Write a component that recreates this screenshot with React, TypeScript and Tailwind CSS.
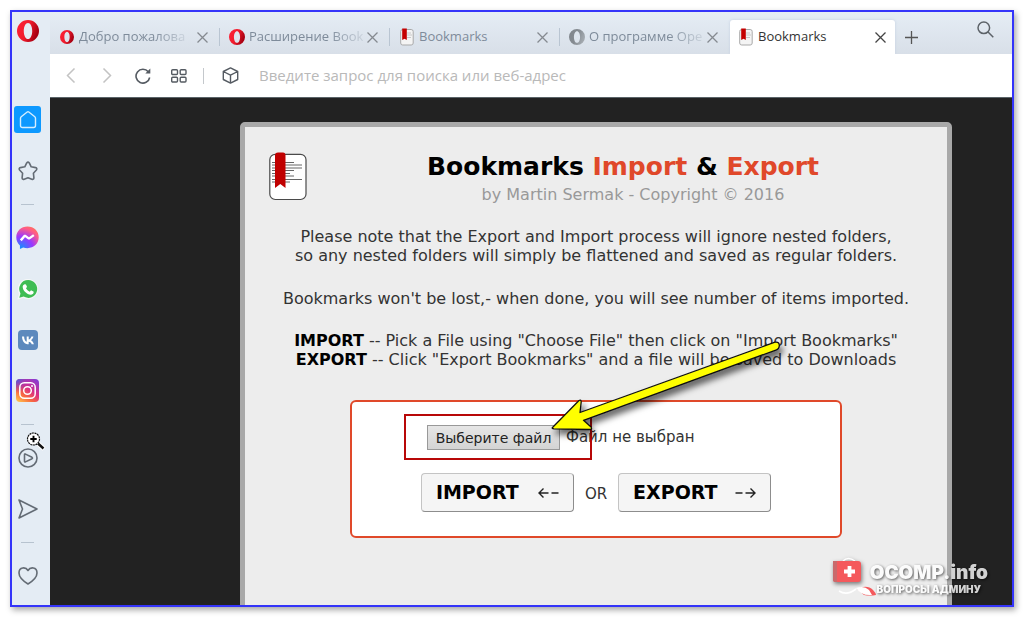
import React, { ReactNode } from "react";

const uiFont = "font-['Open_Sans','Noto_Sans',sans-serif]";
const pageFont = "font-['DejaVu_Sans',sans-serif]";

function OperaRing({ size, gray = false }: { size: number; gray?: boolean }) {
  const id = gray ? "ring-gray" : "ring-red";
  return (
    <svg width={size} height={size} viewBox="0 0 24 24" aria-hidden="true" className="shrink-0">
      <defs>
        <linearGradient id={id} x1="0" y1="0" x2="1" y2="0.4">
          <stop offset="0" stopColor={gray ? "#80868c" : "#ff2138"} />
          <stop offset="0.55" stopColor={gray ? "#858b91" : "#f01c2c"} />
          <stop offset="1" stopColor={gray ? "#a2a8ae" : "#a80012"} />
        </linearGradient>
      </defs>
      <path
        fillRule="evenodd"
        fill={`url(#${id})`}
        d="M12 0a12 12 0 1 1 0 24a12 12 0 0 1 0-24zM12 3.200c-2.600 0-4.600 3.800-4.600 8.800s2 8.800 4.600 8.800s4.600-3.800 4.600-8.800s-2-8.800-4.600-8.800z"
      />
    </svg>
  );
}

function BookFavicon() {
  return (
    <svg width="14" height="18" viewBox="0 0 14 18" aria-hidden="true" className="shrink-0">
      <rect x="0.700" y="1.500" width="12.500" height="15.500" rx="2" fill="#f4f4f4" stroke="#a9a9a9" />
      <path d="M7 5h4M7 7h5M7 9.500h4" stroke="#bdbdbd" strokeWidth="0.800" />
      <path d="M2.200 0.500h4.600v11.500l-2.300-1.200l-2.300 1.200z" fill="#c40000" />
    </svg>
  );
}

function BookIcon() {
  return (
    <svg width="38" height="49" viewBox="0 0 38 49" aria-hidden="true" className="shrink-0">
      <rect x="0.800" y="2.300" width="36.200" height="45.200" rx="5.500" fill="#fff" stroke="#4a4a4a" strokeWidth="1.200" />
      <path
        d="M3 10.500h22M3 13h30M3 16h30M3 18.500h22M3 21.500h18M3 24h22M3 27.500h30M3 30h18"
        stroke="#555"
        strokeWidth="0.900"
      />
      <path d="M6 3.500Q6 0.500 9 0.500h5Q16.500 0.500 16.500 3.500V36l-5.200-4L6 36z" fill="#c00000" />
    </svg>
  );
}

function CloseMark() {
  return (
    <svg width="11" height="11" viewBox="0 0 11 11" fill="none" stroke="currentColor" strokeWidth="1.300">
      <path d="M0.500 0.500l10 10M10.500 0.500l-10 10" />
    </svg>
  );
}

function Tab({
  icon,
  title,
  active = false,
  last = false,
  fade = false,
}: {
  icon: ReactNode;
  title: string;
  active?: boolean;
  last?: boolean;
  fade?: boolean;
}) {
  return (
    <div
      className={
        active
          ? "flex h-[34px] w-[165px] items-center rounded-t-[3px] bg-white pr-[9px] pl-2 text-[#333] shadow-[0_0_3px_#c3cfdf]"
          : "flex h-[34px] w-[170px] items-center pl-[9px] text-[#7e8b9a]"
      }
    >
      <button className="flex min-w-0 flex-1 items-center gap-1 text-left text-[13px] whitespace-nowrap">
        <span className="flex w-4 shrink-0 justify-center">{icon}</span>
        <span className={fade ? "[mask-image:linear-gradient(to_right,#000_70%,#0003)]" : ""}>{title}</span>
      </button>
      <button aria-label="Закрыть вкладку" className={active ? "ml-1 text-[#444]" : "mr-[11px] ml-1 text-[#858a90]"}>
        <CloseMark />
      </button>
      {!active && <span className={last ? "w-px" : "h-[18px] w-px bg-[#b9c5d2]"} />}
    </div>
  );
}

function SideItem({ label, children }: { label: string; children: ReactNode }) {
  return (
    <button aria-label={label} className="flex h-[51px] w-full shrink-0 items-center justify-center">
      {children}
    </button>
  );
}

function SideRule() {
  return (
    <div className="flex h-4 shrink-0 items-center justify-center">
      <span className="h-px w-[13px] bg-[#b7c3cf]" />
    </div>
  );
}

const line = { fill: "none", stroke: "#646c75", strokeWidth: 1.6, strokeLinejoin: "round" as const, strokeLinecap: "round" as const };

function Sidebar() {
  return (
    <nav className="relative flex w-[38px] shrink-0 flex-col bg-[#e4ecf4] pr-[7px]">
      <div className="flex h-[82px] shrink-0 justify-center pt-2">
        <button aria-label="Меню" className="h-[22px]">
          <OperaRing size={22} />
        </button>
      </div>
      <SideItem label="Экспресс-панель">
        <span className="flex size-[27px] items-center justify-center rounded-[3px] bg-[#0d99ff]">
          <svg width="18" height="18" viewBox="0 0 18 18" fill="none" stroke="#d5eeff" strokeWidth="1.400" strokeLinejoin="round">
            <path d="M1.500 7.200Q1.500 6.300 2.200 5.700L8.200 1Q9 0.500 9.800 1L15.800 5.700Q16.500 6.300 16.500 7.200V14.500Q16.500 16.500 14.500 16.500H3.500Q1.500 16.500 1.500 14.500z" />
          </svg>
        </span>
      </SideItem>
      <SideItem label="Закладки">
        <svg width="20" height="20" viewBox="0 0 20 20" {...line}>
          <path d="M8.700 1.900Q10 0.300 11.300 1.900L13.200 5.800L17.500 6.600Q19.600 7.300 18.400 9L15.400 12.200L15.900 16.800Q15.700 18.900 13.800 18.200L10 16.700L6.200 18.200Q4.300 18.900 4.100 16.800L4.600 12.200L1.600 9Q0.400 7.300 2.500 6.600L6.800 5.800z" />
        </svg>
      </SideItem>
      <SideRule />
      <SideItem label="Messenger">
        <svg width="23" height="23" viewBox="0 0 24 24">
          <defs>
            <radialGradient id="msgr" cx="0.200" cy="1" r="1.100">
              <stop offset="0" stopColor="#0a95ff" />
              <stop offset="0.500" stopColor="#9a38ff" />
              <stop offset="0.850" stopColor="#ff5c87" />
              <stop offset="1" stopColor="#ff7061" />
            </radialGradient>
          </defs>
          <path fill="url(#msgr)" d="M12 0.500C5.300 0.500 0.300 5.300 0.300 11.800c0 3.500 1.400 6.500 3.800 8.500v3.600l3.400-1.500c1.400.5 2.900.7 4.500.7c6.700 0 11.700-4.800 11.700-11.300S18.700.5 12 .5z" />
          <path d="M5 15l4.300-5l4.200 3.200L18.600 9.500" fill="none" stroke="#fff" strokeWidth="2.500" strokeLinejoin="bevel" />
        </svg>
      </SideItem>
      <SideItem label="WhatsApp">
        <svg width="22" height="22" viewBox="0 0 24 24">
          <path fill="#f5f8f7" d="M12 1a11 11 0 1 1-5.200 20.700L0.500 23.500l1.800-6.200A11 11 0 0 1 12 1z" />
          <path fill="#3fbd54" d="M12.200 2.300a9.700 9.700 0 1 1-4.900 18L2.500 21.600l1.300-4.700A9.700 9.700 0 0 1 12.200 2.300z" />
          <path
            fill="#fff"
            d="M8.300 6.800h.8c.4 0 .6.200.8.600l.9 2c.1.300.1.500-.1.800l-.9 1.100c.9 1.800 2.200 2.900 4.100 3.700l1-1.200c.2-.3.500-.4.800-.2l2.100 1c.3.100.5.300.4.700c0 1.900-1.600 2.900-3.100 2.900c-4.600-.5-8.700-4.500-8.900-8.500c0-1.200.8-2.500 2.100-2.900z"
          />
        </svg>
      </SideItem>
      <SideItem label="ВКонтакте">
        <svg width="20" height="20" viewBox="0 0 20 20">
          <rect width="20" height="20" rx="4" fill="#5d89bd" />
          <path
            fill="#fff"
            d="M10.700 14.300C6.600 14.300 4.200 11.500 4 6.500h2.100c.1 3.400 1.400 5 2.600 5.300V6.500h2v3c1.200-.1 2.300-1.500 2.700-3h2c-.3 1.800-1.500 3.100-2.400 3.700c.9.500 2.300 1.600 2.900 4.100h-2.200c-.4-1.500-1.600-2.500-3-2.600z"
          />
        </svg>
      </SideItem>
      <SideItem label="Instagram">
        <svg width="23" height="23" viewBox="0 0 23 23">
          <defs>
            <linearGradient id="insta" x1="0.100" y1="1" x2="0.800" y2="0">
              <stop offset="0" stopColor="#ffc24d" />
              <stop offset="0.300" stopColor="#f8693f" />
              <stop offset="0.600" stopColor="#d92e85" />
              <stop offset="1" stopColor="#8a3bd0" />
            </linearGradient>
            <radialGradient id="instaBlue" cx="0" cy="0" r="0.600">
              <stop offset="0" stopColor="#3d62e0" />
              <stop offset="1" stopColor="#8a3bd0" stopOpacity="0" />
            </radialGradient>
          </defs>
          <rect width="23" height="23" rx="4" fill="url(#insta)" />
          <rect width="23" height="23" rx="4" fill="url(#instaBlue)" />
          <g fill="none" stroke="#fff" strokeWidth="1.500">
            <rect x="3.800" y="3.800" width="15.400" height="15.400" rx="4.500" />
            <circle cx="11.500" cy="11.500" r="3.800" />
          </g>
          <circle cx="16" cy="7" r="1" fill="#fff" />
        </svg>
      </SideItem>
      <SideRule />
      <SideItem label="Плеер">
        <svg width="20" height="20" viewBox="0 0 20 20" {...line}>
          <circle cx="10" cy="10" r="9" />
          <path d="M6.500 6.700Q6.500 5.700 7.500 6.100L14 9.300Q15 10 14 10.700L7.500 13.900Q6.500 14.300 6.500 13.300z" />
        </svg>
      </SideItem>
      <SideItem label="Мой поток">
        <svg width="20" height="20" viewBox="0 0 20 20" {...line}>
          <path d="M1 1L19 10L1 19L4.500 10z" />
        </svg>
      </SideItem>
      <SideRule />
      <SideItem label="Избранное">
        <svg width="20" height="18" viewBox="0 0 20 18" {...line}>
          <path d="M10 3.500C7.800-0.200 1-0.300 1 6C1 10.500 5.500 14.200 10 17C14.500 14.200 19 10.500 19 6C19-0.300 12.200-0.200 10 3.500z" />
        </svg>
      </SideItem>
      <svg className="absolute top-[419px] left-[14px]" width="20" height="20" viewBox="0 0 20 20" aria-hidden="true">
        <path d="M12 12.500l6 5.500" stroke="#fff" strokeWidth="4.500" />
        <path d="M12 12.500l5.500 5" stroke="#111" strokeWidth="2.400" />
        <circle cx="7.500" cy="8" r="6" fill="#fff" stroke="#111" strokeWidth="1.200" strokeDasharray="2 0.600" />
        <path d="M7.500 4.800v6.400M4.300 8h6.400" stroke="#000" strokeWidth="1.900" />
      </svg>
    </nav>
  );
}

function TabStrip() {
  return (
    <header className="flex h-[42px] items-end bg-linear-to-b from-[#e5edf5] to-[#d8dfe8]">
      <Tab icon={<OperaRing size={14} />} title="Добро пожалова" fade />
      <Tab icon={<OperaRing size={16} />} title="Расширение Book" fade />
      <Tab icon={<BookFavicon />} title="Bookmarks" />
      <Tab icon={<OperaRing size={16} gray />} title="О программе Оре" fade last />
      <Tab icon={<BookFavicon />} title="Bookmarks" active />
      <button aria-label="Новая вкладка" className="ml-2.5 flex h-[34px] items-center text-[#555]">
        <svg width="13" height="13" viewBox="0 0 13 13" stroke="currentColor" strokeWidth="1.300">
          <path d="M6.500 0v13M0 6.500h13" />
        </svg>
      </button>
      <button aria-label="Поиск по вкладкам" className="mr-[18px] mb-4 ml-auto text-[#5c6268]">
        <svg width="17" height="17" viewBox="0 0 17 17" fill="none" stroke="currentColor" strokeWidth="1.500">
          <circle cx="6.800" cy="6.800" r="5.800" />
          <path d="M11 11l5.300 5.300" />
        </svg>
      </button>
    </header>
  );
}

function AddressBar() {
  return (
    <div className="flex h-11 items-center border-b border-[#5a6468] bg-white pl-4 text-[#555b62]">
      <div className="flex items-center gap-[26px] text-[#c3c3c3]">
        <button aria-label="Назад">
          <svg width="10" height="15" viewBox="0 0 10 15" fill="none" stroke="currentColor" strokeWidth="1.500"><path d="M8.500 0.500l-7 7l7 7" /></svg>
        </button>
        <button aria-label="Вперёд">
          <svg width="10" height="15" viewBox="0 0 10 15" fill="none" stroke="currentColor" strokeWidth="1.500"><path d="M1.500 0.500l7 7l-7 7" /></svg>
        </button>
      </div>
      <button aria-label="Обновить" className="ml-[23px]">
        <svg width="16" height="16" viewBox="0 0 16 16" fill="none" stroke="currentColor" strokeWidth="1.600">
          <path d="M13.300 3.800A6.900 6.900 0 1 0 14.700 9.500" />
          <path d="M15.300 0.600v5h-5z" fill="currentColor" stroke="none" />
        </svg>
      </button>
      <button aria-label="Экспресс-панель" className="ml-5">
        <svg width="16" height="14" viewBox="0 0 16 14" fill="none" stroke="currentColor" strokeWidth="1.400">
          <rect x="0.700" y="0.700" width="5.800" height="4.800" rx="1" />
          <rect x="9.200" y="0.700" width="5.800" height="4.800" rx="1" />
          <rect x="0.700" y="8.200" width="5.800" height="4.800" rx="1" />
          <rect x="9.200" y="8.200" width="5.800" height="4.800" rx="1" />
        </svg>
      </button>
      <span className="ml-4 h-4 w-px bg-[#c4c8cc]" />
      <button aria-label="Криптокошелёк" className="ml-[18px]">
        <svg width="17" height="17" viewBox="0 0 17 17" fill="none" stroke="currentColor" strokeWidth="1.400" strokeLinejoin="round">
          <path d="M8.500 0.900L15.700 4.500V12.500L8.500 16.100L1.300 12.500V4.500zM1.300 4.500L8.500 8.200L15.700 4.500M8.500 8.200V16.100" />
        </svg>
      </button>
      <input
        aria-label="Адресная строка"
        placeholder="Введите запрос для поиска или веб-адрес"
        className="ml-5 min-w-0 flex-1 bg-transparent text-[15px] text-[#333] outline-none placeholder:text-[#b9b9b9]"
      />
    </div>
  );
}

const actionButton =
  "flex h-[39px] w-[153px] items-center justify-between rounded-[4px] border border-[#c4c4c4] border-r-[#8d8d8d] border-b-[#8d8d8d] bg-[#f5f5f5] px-3.5 text-[19px] font-bold text-black";

function DashArrow({ right = false }: { right?: boolean }) {
  return (
    <svg width="21" height="12" viewBox="0 0 21 12" fill="none" stroke="#222" strokeWidth="1.400" aria-hidden="true">
      {right ? <path d="M0.500 6h7M10.500 6h9M15.500 1.500l4.500 4.500l-4.500 4.500" /> : <path d="M20.500 6h-7M10.500 6h-9M5.500 1.500l-4.500 4.500l4.500 4.500" />}
    </svg>
  );
}

function ImportForm() {
  return (
    <form className="relative mx-auto mt-[31px] w-[492px] rounded-[6px] border-2 border-[#e0492a] bg-white pt-[23px] pb-6" onSubmit={(e) => e.preventDefault()}>
      <div className="pl-[75px] text-left">
        <input id="bookmark-file" type="file" className="sr-only" />
        <label htmlFor="bookmark-file" className="inline-flex items-center gap-1.5 text-[15px] whitespace-nowrap text-[#333]">
          <span className="flex h-[25px] w-[133px] items-center justify-center border border-[#999] bg-linear-to-b from-[#e6e6e6] to-[#d4d4d4] text-sm text-[#222]">
            Выберите файл
          </span>
          <span>Файл не выбран</span>
        </label>
      </div>
      <div className="mt-[23px] flex items-center justify-center gap-[11px] text-[15px] text-[#333]">
        <button type="button" className={actionButton}>
          IMPORT <DashArrow />
        </button>
        <span className="pt-1">OR</span>
        <button type="button" className={actionButton}>
          EXPORT <DashArrow right />
        </button>
      </div>
      <div className="absolute top-3 left-[52px] h-[46px] w-[188px] border-2 border-[#b80808]" />
      <svg className="absolute -top-[66px] left-[188px] overflow-visible" width="250" height="110" viewBox="540 336 250 110" aria-hidden="true">
        <defs>
          <filter id="arrow-shadow" x="-10%" y="-20%" width="125%" height="150%">
            <feDropShadow dx="3" dy="5" stdDeviation="3" floodColor="#000" floodOpacity="0.600" />
          </filter>
        </defs>
        <path
          d="M552.500 427.500L579 400.500Q581.300 399.500 581.200 402L580 412.500L775 342.200Q779.500 341.500 779.300 346Q779 349 776.500 349.800L583.500 420.300L591 427Q592.500 429.500 589.500 429.500L554 428.800Q551.500 428.500 552.500 427.500z"
          fill="#ffff00"
          stroke="#111"
          strokeWidth="1.300"
          strokeLinejoin="round"
          filter="url(#arrow-shadow)"
        />
      </svg>
    </form>
  );
}

function Watermark() {
  return (
    <div className="absolute right-6 bottom-2.5 flex items-end gap-0.5" aria-label="OCOMP.info">
      <svg width="36" height="36" viewBox="0 0 36 36" className="mb-0.5 drop-shadow-[1px_2px_2px_rgba(0,0,0,0.5)]" aria-hidden="true">
        <path d="M11 4q5-5 12 0" fill="none" stroke="#fff" strokeWidth="1.500" />
        <rect x="1" y="4" width="28" height="21" rx="3" fill="#f4595c" />
        <path d="M1 4h4v21h-2q-2 0-2-2z" fill="#c96a6c" />
        <path d="M17.500 9v11M12 14.500h11" stroke="#fff" strokeWidth="3.800" />
      </svg>
      <svg width="60" height="14" viewBox="0 0 60 14" className="absolute -bottom-0.5 left-1" aria-hidden="true">
        <path d="M3 8q8 5 17-2" fill="none" stroke="#fff" strokeWidth="1.600" />
        <path d="M21 6q10-5 16 1q3 3 3 5q-6 1-12 0z" fill="#f4595c" />
        <path d="M20 5q8-3 13 2l3 5q-11 1-16-7z" fill="#fff" />
      </svg>
      <div className="flex flex-col items-center text-white opacity-80 [text-shadow:1px_1px_3px_rgba(0,0,0,0.8)]">
        <span className="font-['Inter',sans-serif] text-[19px] leading-5 font-black">OCOMP.info</span>
        <span className="font-['Inter','Noto_Sans',sans-serif] text-[10px] leading-3 font-black">ВОПРОСЫ АДМИНУ</span>
      </div>
    </div>
  );
}

export default function App() {
  return (
    <div className="flex h-screen bg-white p-2.5">
      <div className={`${uiFont} flex min-w-0 flex-1 overflow-hidden border-2 border-[#3434fa] shadow-[2px_3px_6px_rgba(0,0,0,0.35)]`}>
        <Sidebar />
        <div className="flex min-w-0 flex-1 flex-col">
          <TabStrip />
          <AddressBar />
          <main className="relative min-h-0 flex-1 overflow-hidden bg-[#222] pt-6 pr-[60px] pl-[190px]">
            <article className={`${pageFont} min-h-full rounded-[5px] border-[5px] border-[#a9a9a9] bg-[#ededed] pb-20 text-center text-[16px] leading-[19px] text-[#333]`}>
              <div className="flex items-start pt-[25px] pr-6 pl-6">
                <BookIcon />
                <div className="flex-1 pl-4">
                  <h1 className="text-[25px] leading-[30px] font-bold text-black">
                    Bookmarks <span className="text-[#e0482a]">Import</span> &amp; <span className="text-[#e0482a]">Export</span>
                  </h1>
                  <p className="mt-[3px] pl-5 text-[#999]">by Martin Sermak - Copyright © 2016</p>
                </div>
              </div>
              <p className="mt-[23px] whitespace-nowrap">
                Please note that the Export and Import process will ignore nested folders,
                <br />
                so any nested folders will simply be flattened and saved as regular folders.
              </p>
              <p className="mt-6 whitespace-nowrap">Bookmarks won't be lost,- when done, you will see number of items imported.</p>
              <p className="mt-[23px] whitespace-nowrap">
                <b className="text-black">IMPORT</b> -- Pick a File using "Choose File" then click on "Import Bookmarks"
                <br />
                <b className="text-black">EXPORT</b> -- Click "Export Bookmarks" and a file will be saved to Downloads
              </p>
              <ImportForm />
            </article>
            <Watermark />
          </main>
        </div>
      </div>
    </div>
  );
}
